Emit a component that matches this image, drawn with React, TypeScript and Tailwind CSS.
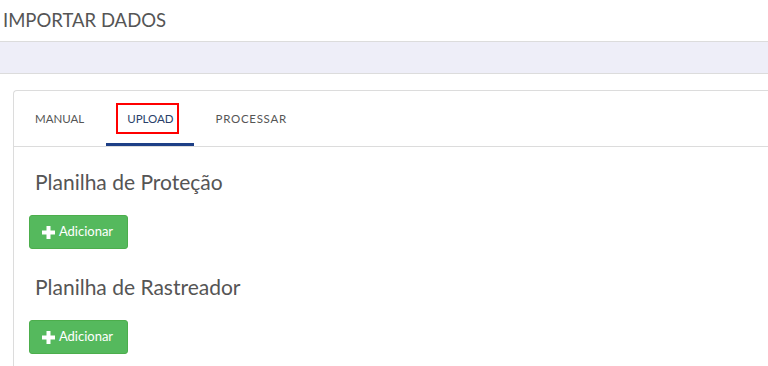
function PlusIcon() {
  return (
    <svg width="13" height="13" viewBox="0 0 13 13" fill="currentColor" aria-hidden>
      <rect x="4.5" y="0" width="4" height="13" />
      <rect x="0" y="4.5" width="13" height="4" />
    </svg>
  )
}

function AddButton() {
  return (
    <button
      type="button"
      className="flex h-[34px] w-[99px] items-center justify-center gap-[4px] rounded-[3px] border border-[#4cae4c] bg-[#55b95d] pr-[2px] text-[13px] text-white"
    >
      <PlusIcon />
      Adicionar
    </button>
  )
}

function Section({ title }: { title: string }) {
  return (
    <div className="flex flex-col">
      <h2 className="pl-[21px] text-[21px] leading-[28px] text-[#555]">{title}</h2>
      <div className="mt-[19px] pl-[15px]">
        <AddButton />
      </div>
    </div>
  )
}

export default function App() {
  return (
    <div className="h-[366px] w-[768px] overflow-hidden bg-white font-['Lato',sans-serif]">
      {/* page title */}
      <div className="flex h-[42px] items-center border-b border-[#dcdcdc] pl-[3px]">
        <h1 className="text-[18.5px] text-[#555]">IMPORTAR DADOS</h1>
      </div>
      <div className="h-[32px] border-b border-[#dcdcdc] bg-[#eeeef8]" />

      <div className="pl-[13px] pt-[16px]">
        <div className="h-[300px] rounded-tl-[4px] border-l border-t border-[#dcdcdc]">
          {/* tabs */}
          <div className="flex h-[56px] items-stretch border-b border-[#dcdcdc]">
            <div className="flex items-center pl-[21px] pr-[22px]">
              <span className="text-[11.5px] text-[#555]">MANUAL</span>
            </div>
            <div className="flex items-center border-b-[3px] border-[#1d3f86] pl-[10px] pr-[15px] pt-[3px]">
              <span className="border-2 border-[#ff0000] py-[5px] pl-[9px] pr-[3px] text-[11.5px] text-[#2a3f6a]">
                UPLOAD
              </span>
            </div>
            <div className="flex items-center pl-[22px]">
              <span className="text-[11.5px] tracking-[0.7px] text-[#555]">PROCESSAR</span>
            </div>
          </div>

          <div className="flex flex-col gap-[24px] pt-[21px]">
            <Section title="Planilha de Proteção" />
            <Section title="Planilha de Rastreador" />
          </div>
        </div>
      </div>
    </div>
  )
}
